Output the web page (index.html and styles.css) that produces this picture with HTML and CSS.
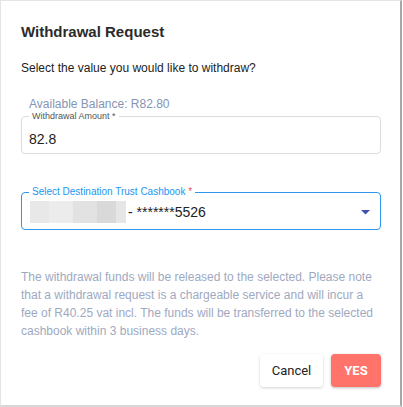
FILE: index.html
```html
<!DOCTYPE html>
<html>
<head>
<meta charset="utf-8">
<link rel="stylesheet" href="styles.css">
</head>
<body>
<div class="dialog">
  <h2 class="title">Withdrawal Request</h2>
  <p class="prompt">Select the value you would like to withdraw?</p>
  <div class="balance">Available Balance: R82.80</div>
  <fieldset class="field">
    <legend class="legend">Withdrawal Amount *</legend>
    <div class="value">82.8</div>
  </fieldset>
  <fieldset class="field select">
    <legend class="legend blue">Select Destination Trust Cashbook <span class="req">*</span></legend>
    <div class="value row">
      <span class="blur"></span><span class="acct">- *******5526</span>
      <svg class="caret" width="9" height="5" viewBox="0 0 9 5"><path d="M0 0h9L4.5 4.5z" fill="#3f51b5"/></svg>
    </div>
  </fieldset>
  <p class="note">The withdrawal funds will be released to the selected. Please note that a withdrawal request is a chargeable service and will incur a fee of R40.25 vat incl. The funds will be transferred to the selected cashbook within 3 business days.</p>
  <div class="actions">
    <button class="btn cancel">Cancel</button>
    <button class="btn yes">YES</button>
  </div>
</div>
</body>
</html>
```
FILE: styles.css
```css
html, body { margin: 0; padding: 0; background: #fff; }
body { font-family: "Liberation Sans", Arial, sans-serif; }
.dialog {
  width: 402px; height: 407px;
  border-top: 1px solid #e4e4e4; border-left: 1px solid #e4e4e4;
  border-right: 2px solid #a8a8a8; border-bottom: 2px solid #d8d8d8;
  background: #fff;
  padding: 0 19px 0 20px; box-sizing: border-box;
}
.title { margin: 22px 0 0 0; font-size: 15px; font-weight: 600; color: #2b2b2b; line-height: 18px; }
.prompt { margin: 20px 0 0 0; font-size: 12px; color: #222; line-height: 14px; }
.balance { margin: 22px 0 0 8px; font-size: 12px; color: #8595b3; line-height: 14px; }
.field {
  margin: 0; padding: 0 8px 0 7px; border: 1px solid #dcdcdc; border-radius: 4px;
  height: 43px; box-sizing: border-box; min-width: 0;
}
.legend { font-size: 9px; color: #555; padding: 0 3px; line-height: 10px; margin-left: 0; }
.blue { color: #2196f3; font-size: 10px; }
.req { color: #f0506e; }
.value { font-size: 14px; color: #222; line-height: 18px; margin-top: 9px; }
.select { margin-top: 33px; border-color: #2f96ee; }
.row { display: flex; align-items: center; margin-top: 4px; }
.blur {
  width: 96px; height: 22px; display: inline-block; margin-left: 1px;
  background: linear-gradient(90deg, #e8e8e8 0 20%, #ececec 20% 45%, #e2e2e2 45% 70%, #d9d9d9 70% 90%, #e6e6e6 90%);
}
.acct { margin-left: 2px; font-size: 14px; }
.caret { margin-left: auto; margin-right: 2px; }
.note { margin: 38px 0 0 0; font-size: 12px; line-height: 18px; color: #9ea9bf; }
.actions { display: flex; justify-content: flex-end; gap: 8px; margin-top: 14px; }
.btn {
  font-family: Roboto, sans-serif; font-size: 13px; border: none; border-radius: 4px;
  height: 33px; cursor: pointer;
}
.cancel { width: 63px; background: #fff; color: #222; box-shadow: 0 1px 3px rgba(0,0,0,0.18); }
.yes { width: 50px; background: #ff736a; color: #fff; font-weight: 700; box-shadow: 0 1px 3px rgba(0,0,0,0.25); }
```
